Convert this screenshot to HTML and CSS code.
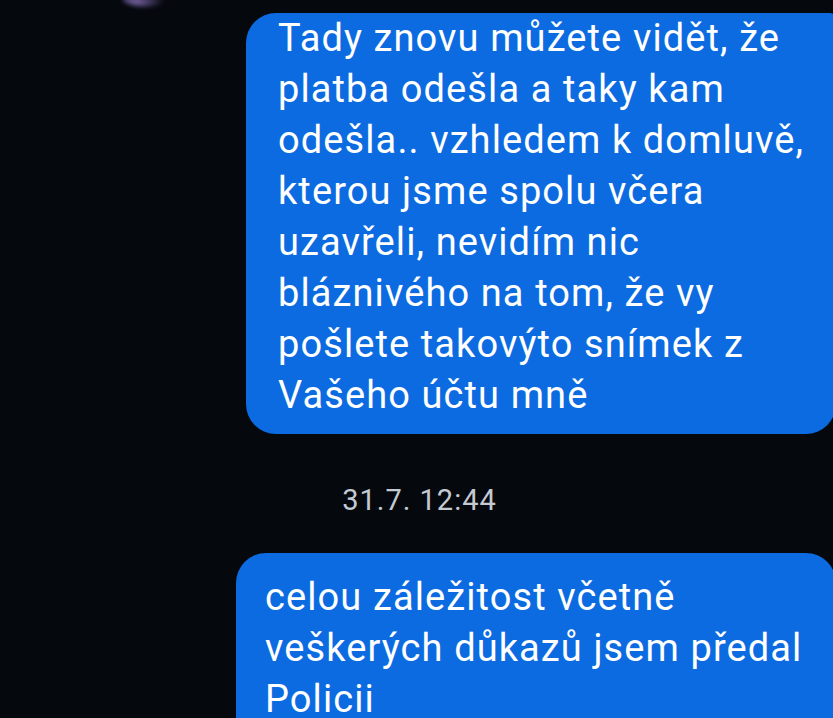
FILE: index.html
```html
<!DOCTYPE html>
<html lang="cs">
<head>
    <meta charset="UTF-8">
    <meta name="viewport" content="width=device-width, initial-scale=1.0">
    <title>Zprávy</title>
    <link rel="stylesheet" href="styles.css">
</head>
<body>
    <div class="chat">
        <div class="peer-row">
            <div class="avatar"></div>
        </div>

        <div class="bubble bubble-first">
            <p class="bubble-text">Tady znovu můžete vidět, že<br>
            platba odešla a taky kam<br>
            odešla.. vzhledem k domluvě,<br>
            kterou jsme spolu včera<br>
            uzavřeli, nevidím nic<br>
            bláznivého na tom, že vy<br>
            pošlete takovýto snímek z<br>
            Vašeho účtu mně</p>
        </div>

        <div class="timestamp">31.7. 12:44</div>

        <div class="bubble bubble-second">
            <p class="bubble-text">celou záležitost včetně<br>
            veškerých důkazů jsem předal<br>
            Policii</p>
        </div>
    </div>
</body>
</html>
```

FILE: styles.css
```css
html, body {
    height: 100%;
}
body {
    margin: 0;
    background-color: #05080d;
    font-family: Roboto, "Noto Sans", sans-serif;
    overflow: hidden;
}
.chat {
    display: flex;
    flex-direction: column;
    padding-top: 13px;
}
.peer-row {
    height: 0;
    padding-left: 122px;
}
.avatar {
    width: 46px;
    height: 18px;
    margin-top: -24px;
    border-radius: 50%;
    background: radial-gradient(ellipse at 30% 70%, rgba(170, 140, 230, 0.7), rgba(40, 30, 60, 0.2) 60%, transparent 75%);
    filter: blur(2px);
}
.bubble {
    align-self: flex-end;
    margin-right: -3px;
    background-color: #0c6be1;
    color: #fff;
    font-size: 38px;
    line-height: 51px;
    letter-spacing: 1.1px;
    border-radius: 30px;
    white-space: nowrap;
}
.bubble-text {
    margin: 0;
}
.bubble-first {
    width: 558px;
    padding: 0 0 13px 32px;
    border-top-right-radius: 6px;
}
.bubble-second {
    width: 571px;
    padding: 19px 0 30px 29px;
}
.timestamp {
    padding: 49px 0 36px 6px;
    text-align: center;
    color: #c3cad2;
    font-size: 29px;
    line-height: 34px;
    letter-spacing: 1px;
}
```
